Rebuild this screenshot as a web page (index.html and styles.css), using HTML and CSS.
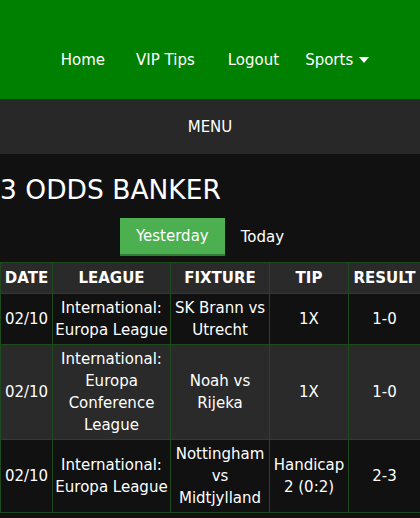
FILE: index.html
```html
<!DOCTYPE html>
<html lang="en">
<head>
<meta charset="utf-8">
<title>3 Odds Banker</title>
<link rel="stylesheet" href="styles.css">
</head>
<body>
<header class="topbar">
  <nav class="nav">
    <a class="nav-link" href="#">Home</a>
    <a class="nav-link" href="#">VIP Tips</a>
    <a class="nav-link nav-logout" href="#">Logout</a>
    <a class="nav-link nav-sports" href="#">Sports <svg class="caret" width="10" height="6" viewBox="0 0 10 6"><path d="M0 0H10L5 6Z" fill="#fff"/></svg></a>
  </nav>
</header>
<div class="menubar">MENU</div>
<main class="content">
  <h1 class="title">3 ODDS BANKER</h1>
  <div class="tabs">
    <button class="tab active">Yesterday</button>
    <button class="tab">Today</button>
  </div>
  <table class="tips">
    <colgroup>
      <col class="c-date">
      <col class="c-league">
      <col class="c-fixture">
      <col class="c-tip">
      <col class="c-result">
    </colgroup>
    <thead>
      <tr><th>DATE</th><th>LEAGUE</th><th>FIXTURE</th><th>TIP</th><th>RESULT</th></tr>
    </thead>
    <tbody>
      <tr><td>02/10</td><td>International: Europa League</td><td>SK Brann vs Utrecht</td><td>1X</td><td>1-0</td></tr>
      <tr class="alt"><td>02/10</td><td>International: Europa Conference League</td><td>Noah vs Rijeka</td><td>1X</td><td>1-0</td></tr>
      <tr><td>02/10</td><td>International: Europa League</td><td>Nottingham vs Midtjylland</td><td>Handicap 2 (0:2)</td><td>2-3</td></tr>
    </tbody>
  </table>
</main>
</body>
</html>
```

FILE: styles.css
```css
html, body {
  margin: 0;
  padding: 0;
  background: #111111;
  color: #ffffff;
  font-family: "DejaVu Sans", Verdana, sans-serif;
  font-size: 15px;
}
.topbar {
  background: #008000;
  height: 99px;
  display: flex;
  align-items: center;
  justify-content: center;
  box-sizing: border-box;
  padding-top: 21px;
}
.nav {
  display: flex;
  gap: 31px;
  padding-left: 10px;
}
.nav-link {
  color: #fff;
  text-decoration: none;
  font-size: 15px;
  display: flex;
  align-items: center;
  gap: 6px;
}
.nav-logout { margin-left: 2px; }
.nav-sports { margin-left: -5px; }
.caret { display: block; }
.menubar {
  background: #282828;
  height: 55px;
  display: flex;
  align-items: center;
  justify-content: center;
  font-size: 15px;
}
.content { padding: 0; }
.title {
  margin: 18px 0 0 0;
  font-weight: normal;
  font-size: 26.5px;
  line-height: 36px;
}
.tabs {
  display: flex;
  justify-content: center;
  margin-top: 10px;
  gap: 0;
}
.tab {
  font-family: inherit;
  font-size: 15px;
  color: #fff;
  background: transparent;
  border: none;
  padding: 0 16px;
  height: 38px;
}
.tab.active {
  background: #4caf50;
  border-bottom: 2px solid #2e7d32;
}
.tips {
  margin-top: 6px;
  width: 420px;
  table-layout: fixed;
  border-collapse: collapse;
  font-size: 15px;
}
.c-date { width: 52px; }
.c-league { width: 118px; }
.c-fixture { width: 99px; }
.c-tip { width: 79px; }
.c-result { width: 72px; }
.tips th, .tips td {
  border: 1px solid #1e4a1e;
  padding: 3px 2px;
  line-height: 22px;
  text-align: center;
}
.tips th {
  background: #2a2a2a;
  font-weight: bold;
  font-size: 15px;
  padding: 4px 2px;
}
.tips tr.alt td { background: #2a2a2a; }
```
